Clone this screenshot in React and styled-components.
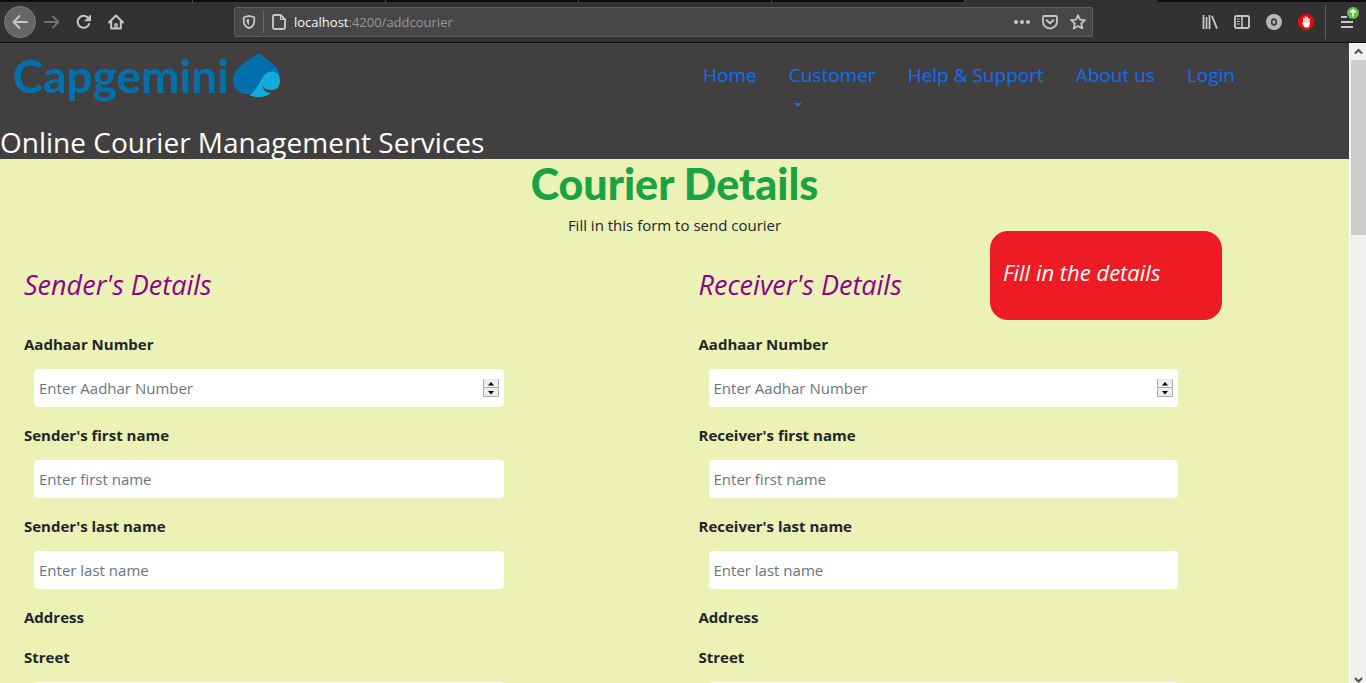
import React from "react";
import styled, { createGlobalStyle } from "styled-components";

const GlobalStyle = createGlobalStyle`
  * { box-sizing: border-box; }
  html, body { margin: 0; padding: 0; }
  body {
    font-family: "Open Sans", "Noto Sans", sans-serif;
    font-size: 15px;
    line-height: 24px;
    color: #212529;
    overflow: hidden;
  }
  h1, h2, p { margin: 0; }
  button, input { font: inherit; }
`;

const Window = styled.div`
  display: flex;
  flex-direction: column;
  height: 100vh;
  background: #323234;
`;

const TabStrip = styled.div`
  flex: none;
  display: grid;
  grid-template-columns: repeat(7, 193px) 1fr;
  height: 2px;
  background: #0c0c0d;
`;

const TabEdge = styled.span`
  border-right: 1px solid ${(p) => (p.$active ? "#323234" : "#4a4a4c")};
  background: ${(p) => (p.$active ? "#323234" : "transparent")};
`;

const Toolbar = styled.nav`
  flex: none;
  display: flex;
  align-items: center;
  height: 41px;
  padding: 0 4px;
  border-bottom: 1px solid #0c0c0d;
`;

const ToolButton = styled.button`
  display: flex;
  align-items: center;
  justify-content: center;
  flex: none;
  width: ${(p) => p.$width || 32}px;
  height: 32px;
  padding: 0;
  border: ${(p) => (p.$round ? "1px solid #7a7a7b" : "0")};
  border-radius: ${(p) => (p.$round ? "50%" : "2px")};
  background: ${(p) => (p.$round ? "#666667" : "transparent")};
  color: ${(p) => (p.$dim ? "#6f6f70" : "#c6c6c7")};
`;

const UrlBar = styled.div`
  flex: 1;
  display: flex;
  align-items: center;
  min-width: 0;
  height: 30px;
  margin: 0 101px 0 102px;
  border: 1px solid #5d5d5f;
  border-radius: 2px;
  background: #474749;
`;

const UrlDivider = styled.span`
  width: 1px;
  height: 22px;
  background: #68686a;
`;

const UrlText = styled.div`
  flex: 1;
  font-size: 13px;
  color: #98989a;

  b { font-weight: 400; color: #f9f9fa; }
`;

const ToolDivider = styled.span`
  width: 1px;
  height: 34px;
  margin: 0 4px 0 3px;
  background: #5d5d5f;
`;

const Viewport = styled.div`
  flex: 1;
  display: flex;
  min-height: 0;
`;

const Page = styled.div`
  flex: 1;
  min-width: 0;
  overflow: hidden;
  background: #ecf2b6;
`;

const ScrollTrack = styled.div`
  flex: none;
  display: flex;
  flex-direction: column;
  align-items: center;
  width: 17px;
  border-left: 1px solid #fff;
  background: #f0f0f0;
`;

const ScrollArrow = styled.span`
  display: flex;
  align-items: center;
  justify-content: center;
  height: 17px;
  color: #505050;
`;

const ScrollThumb = styled.span`
  width: 15px;
  height: 175px;
  background: #cdcdcd;
`;

const ScrollSpace = styled.span`
  flex: 1;
`;

const Header = styled.header`
  display: flex;
  flex-direction: column;
  justify-content: space-between;
  height: 116px;
  background: #423f40;
`;

const HeaderRow = styled.div`
  display: flex;
  justify-content: space-between;
  align-items: flex-start;
  padding: 8px 114px 0 13px;
`;

const Logo = styled.a`
  display: flex;
  align-items: center;
  gap: 4px;
  height: 50px;
  color: #0070ad;
  font-family: Lato, sans-serif;
  font-size: 46px;
  font-weight: 700;
  line-height: 50px;
  text-decoration: none;
`;

const NavList = styled.div`
  display: flex;
  gap: 32px;
  padding-top: 9px;
`;

const NavLink = styled.a`
  font-size: 19px;
  line-height: 30px;
  color: #0d6efd;
  text-decoration: none;
`;

const Caret = styled.span`
  display: block;
  width: 0;
  margin: 13px 0 0 5px;
  border: 4px solid transparent;
  border-top-color: #0d6efd;
  border-bottom: 0;
`;

const SiteTitle = styled.p`
  font-size: 28px;
  line-height: 34px;
  color: #fff;
`;

const FormTitle = styled.h1`
  font-family: Lato, sans-serif;
  font-weight: 900;
  font-size: 43px;
  line-height: 50px;
  text-align: center;
  color: #19a342;
`;

const Intro = styled.p`
  padding: 4px 0 6px;
  text-align: center;
`;

const Columns = styled.form`
  display: grid;
  grid-template-columns: 1fr 1fr;
`;

const Section = styled.section`
  position: relative;
  padding: 24px;
`;

const SectionTitle = styled.h2`
  margin-bottom: 29px;
  font-size: 27px;
  font-style: italic;
  font-weight: 400;
  line-height: 36px;
  color: #8b008b;
`;

const FieldLabel = styled.label`
  display: block;
  font-weight: 700;
`;

const GroupLabel = styled.p`
  margin-bottom: 16px;
  font-weight: 700;
`;

const InputBox = styled.div`
  display: flex;
  align-items: center;
  width: 75%;
  height: 38px;
  margin: 13px 0 16px 10px;
  padding: 0 5px;
  border-radius: 4px;
  background: #fff;
`;

const TextInput = styled.input`
  flex: 1;
  min-width: 0;
  padding: 0;
  border: 0;
  outline: 0;
  background: transparent;
  color: #212529;
  appearance: textfield;

  &::placeholder { color: #6c757d; opacity: 1; }
  &::-webkit-inner-spin-button { appearance: none; }
`;

const Spinner = styled.span`
  display: flex;
  flex-direction: column;
  width: 16px;
  height: 18px;
  background: #f0f0f0;
`;

const SpinButton = styled.button`
  display: flex;
  align-items: center;
  justify-content: center;
  flex: 1;
  min-height: 0;
  padding: 0;
  border: 1px solid #adadad;
  border-top-color: #e8e8e8;
  background: #eeeeee;
`;

const Callout = styled.aside`
  position: absolute;
  top: -12px;
  right: 127px;
  width: 232px;
  height: 89px;
  padding: 26px 13px;
  border-radius: 18px;
  background: #ed1c24;
  color: #fff;
  font-size: 22px;
  font-style: italic;
  line-height: 30px;
`;

const Icon = ({ size = 16, children, ...rest }) => (
  <svg width={size} height={size} viewBox="0 0 16 16" fill="none" stroke="currentColor"
    strokeWidth="2" strokeLinecap="round" strokeLinejoin="round" aria-hidden="true" {...rest}>
    {children}
  </svg>
);

const BackIcon = () => <Icon><path d="M15 8H1.5M7.500 2L1.500 8l6 6" /></Icon>;
const ForwardIcon = () => <Icon><path d="M1 8h13.500M9 2.500l5.500 5.500L9 13.500" /></Icon>;
const ReloadIcon = () => (
  <Icon><path d="M13.200 10A6 6 0 1 1 12.300 4" /><path d="M14.500 1.500v5.300H9.200z" fill="currentColor" strokeWidth="1" /></Icon>
);
const HomeIcon = () => (
  <Icon><path d="M1 8.500L8 1.500l7 7M3.200 7.500V14.500h9.600V7.500" /><path d="M7 14v-4h2v4" strokeWidth="1.500" /></Icon>
);
const ShieldIcon = () => (
  <Icon size={14}><path d="M8 1L14 2.600V7c0 4-2.500 6.500-6 8C4.500 13.500 2 11 2 7V2.600z" /><path d="M8 4.500V11.500C6 10.200 5.200 8.500 5.200 6V5z" fill="currentColor" stroke="none" /></Icon>
);
const PageIcon = () => (
  <Icon><path d="M3.500 1H9.500L14 5.500V13.500a1.500 1.500 0 0 1-1.500 1.500h-9A1.500 1.500 0 0 1 2 13.500v-11A1.500 1.500 0 0 1 3.500 1z" strokeWidth="1.900" /><path d="M9.500 1v4.500H14" strokeWidth="1.200" /></Icon>
);
const DotsIcon = () => (
  <Icon><g fill="currentColor" stroke="none"><circle cx="2" cy="8" r="2" /><circle cx="8" cy="8" r="2" /><circle cx="14" cy="8" r="2" /></g></Icon>
);
const PocketIcon = () => (
  <Icon><path d="M2.200 2h11.600q1.200 0 1.200 1.200V7.500a7 7 0 0 1-14 0V3.200Q1 2 2.200 2z" strokeWidth="1.800" /><path d="M4.800 6.300L8 9.400l3.200-3.100" /></Icon>
);
const StarIcon = () => (
  <Icon><path d="M8 1.200l2 4.500 5 .5-3.800 3.300 1.200 5L8 12l-4.400 2.500 1.200-5L1 6.200l5-.5z" strokeWidth="1.700" /></Icon>
);
const LibraryIcon = () => (
  <Icon strokeLinecap="butt"><path d="M1.500 1v14M4.500 3v12M7.500 1v14M10 2.200L15 14.600" strokeWidth="1.800" /></Icon>
);
const SidebarIcon = () => (
  <Icon><rect x="1" y="2" width="14" height="12" rx="1.500" strokeWidth="1.900" /><path d="M8 2v12" strokeWidth="1.600" /><path d="M3.400 5h2M3.400 7.500h2M3.400 10h2" strokeWidth="1" /></Icon>
);
const AccountIcon = () => (
  <Icon><circle cx="8" cy="8" r="8" fill="#b7b7b8" stroke="none" /><ellipse cx="8" cy="8" rx="2.300" ry="2.900" stroke="#3c3c3e" strokeWidth="1.700" /></Icon>
);
const BlockerIcon = () => (
  <Icon>
    <path d="M5 0h6l5 5v6l-5 5H5l-5-5V5z" fill="#e40d0d" stroke="none" />
    <path d="M5.800 4.500v5M7.500 3v6M9.200 3.200v6M10.900 5v5" stroke="#fff" strokeWidth="1.400" />
    <path d="M3.800 8.200L5.800 9l5.700-.5V11c0 2-1.500 2.500-3 2.500-1.800 0-2.500-.8-3.200-2z" fill="#fff" stroke="none" />
  </Icon>
);
const MenuIcon = () => (
  <svg width="32" height="32" viewBox="0 0 32 32" aria-hidden="true">
    <path d="M11 11h6M11 16h12M11 21h12" stroke="#c6c6c7" strokeWidth="2" />
    <circle cx="23" cy="7" r="6" fill="#6abf40" />
    <path d="M23 10.500V4M20.200 6.500L23 3.800l2.800 2.700" fill="none" stroke="#fff" strokeWidth="1.600" />
  </svg>
);
const Spade = () => (
  <svg width="48" height="46" viewBox="0 0 48 46" aria-hidden="true">
    <path d="M25.500 0C19 6 0 13 0 27c0 8 6 14 14 14 5 0 9-2 12-5l20.500-13C46 11 33 7 25.500 0z" fill="#0070ad" />
    <path d="M39 18.500c-11 0-11 16-22.500 23.500C23 46 34 44 37.500 40c-4 0-7.500-3-8-7 2 3 5 4 9 4 5.500 0 8.500-4 8.500-9.500s-3-9-8-9z" fill="#12abdb" />
  </svg>
);
const Chevron = ({ down }) => (
  <svg width="9" height="7" viewBox="0 0 9 7" fill="none" stroke="#505050" strokeWidth="2" aria-hidden="true">
    <path d={down ? "M1 2l3.500 3.500L8 2" : "M1 5.500L4.500 2 8 5.500"} />
  </svg>
);
const Triangle = ({ down }) => (
  <svg width="6" height="4" viewBox="0 0 6 4" aria-hidden="true">
    <path d={down ? "M0 0h6L3 3.500z" : "M0 3.500h6L3 0z"} fill="#000" />
  </svg>
);

function Field({ id, label, placeholder, numeric }) {
  return (
    <>
      <FieldLabel htmlFor={id}>{label}</FieldLabel>
      <InputBox>
        <TextInput id={id} type={numeric ? "number" : "text"} placeholder={placeholder} />
        {numeric && (
          <Spinner>
            <SpinButton type="button" aria-label="Increase"><Triangle /></SpinButton>
            <SpinButton type="button" aria-label="Decrease"><Triangle down /></SpinButton>
          </Spinner>
        )}
      </InputBox>
    </>
  );
}

function PersonSection({ who, children }) {
  const key = who.toLowerCase();
  return (
    <Section>
      <SectionTitle>{who}'s Details</SectionTitle>
      {children}
      <Field id={`${key}-aadhaar`} label="Aadhaar Number" placeholder="Enter Aadhar Number" numeric />
      <Field id={`${key}-first`} label={`${who}'s first name`} placeholder="Enter first name" />
      <Field id={`${key}-last`} label={`${who}'s last name`} placeholder="Enter last name" />
      <GroupLabel>Address</GroupLabel>
      <Field id={`${key}-street`} label="Street" />
    </Section>
  );
}

export default function App() {
  return (
    <Window>
      <GlobalStyle />
      <TabStrip>
        {[0, 1, 2, 3, 4].map((n) => <TabEdge key={n} />)}
        <TabEdge $active />
      </TabStrip>
      <Toolbar>
        <ToolButton $round aria-label="Back"><BackIcon /></ToolButton>
        <ToolButton $dim aria-label="Forward"><ForwardIcon /></ToolButton>
        <ToolButton aria-label="Reload"><ReloadIcon /></ToolButton>
        <ToolButton aria-label="Home page"><HomeIcon /></ToolButton>
        <UrlBar>
          <ToolButton $width={28} aria-label="Protection"><ShieldIcon /></ToolButton>
          <UrlDivider />
          <ToolButton $width={30} aria-label="Site information"><PageIcon /></ToolButton>
          <UrlText><b>localhost</b>:4200/addcourier</UrlText>
          <ToolButton $width={28} aria-label="Page actions"><DotsIcon /></ToolButton>
          <ToolButton $width={28} aria-label="Save to Pocket"><PocketIcon /></ToolButton>
          <ToolButton $width={28} aria-label="Bookmark"><StarIcon /></ToolButton>
        </UrlBar>
        <ToolButton aria-label="Library"><LibraryIcon /></ToolButton>
        <ToolButton aria-label="Sidebars"><SidebarIcon /></ToolButton>
        <ToolButton aria-label="Account"><AccountIcon /></ToolButton>
        <ToolButton aria-label="Ad blocker"><BlockerIcon /></ToolButton>
        <ToolDivider />
        <ToolButton aria-label="Menu"><MenuIcon /></ToolButton>
      </Toolbar>
      <Viewport>
        <Page>
          <Header>
            <HeaderRow>
              <Logo href="#home">Capgemini<Spade /></Logo>
              <NavList>
                <NavLink href="#home">Home</NavLink>
                <NavLink href="#customer">Customer<Caret /></NavLink>
                <NavLink href="#help">Help &amp; Support</NavLink>
                <NavLink href="#about">About us</NavLink>
                <NavLink href="#login">Login</NavLink>
              </NavList>
            </HeaderRow>
            <SiteTitle>Online Courier Management Services</SiteTitle>
          </Header>
          <main>
            <FormTitle>Courier Details</FormTitle>
            <Intro>Fill in this form to send courier</Intro>
            <Columns>
              <PersonSection who="Sender" />
              <PersonSection who="Receiver">
                <Callout>Fill in the details</Callout>
              </PersonSection>
            </Columns>
          </main>
        </Page>
        <ScrollTrack>
          <ScrollArrow><Chevron /></ScrollArrow>
          <ScrollThumb />
          <ScrollSpace />
          <Chevron down />
        </ScrollTrack>
      </Viewport>
    </Window>
  );
}
